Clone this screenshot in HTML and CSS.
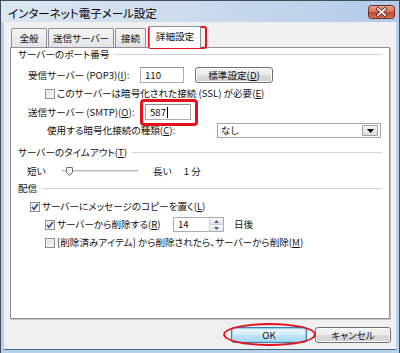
FILE: index.html
```html
<!DOCTYPE html>
<html lang="ja">
<head>
<meta charset="utf-8">
<title>インターネット電子メール設定</title>
<link rel="stylesheet" href="styles.css">
</head>
<body>
<div class="window">
  <div class="titlebar">
    <span class="title">インターネット電子メール設定</span>
    <div class="close">
      <svg width="27" height="14" viewBox="0 0 27 14">
        <defs>
          <linearGradient id="cg" x1="0" y1="0" x2="0" y2="1">
            <stop offset="0" stop-color="#e6a393"/>
            <stop offset="0.5" stop-color="#d7725f"/>
            <stop offset="0.5" stop-color="#c4442f"/>
            <stop offset="1" stop-color="#d3745c"/>
          </linearGradient>
        </defs>
        <rect x="0.5" y="0.5" width="26" height="13" rx="3" fill="url(#cg)" stroke="#6e2d22"/>
        <path d="M10 4 L17 10 M17 4 L10 10" stroke="#4a1a12" stroke-width="3.2" stroke-linecap="square"/>
        <path d="M10 4 L17 10 M17 4 L10 10" stroke="#ffffff" stroke-width="1.8" stroke-linecap="square"/>
      </svg>
    </div>
  </div>
  <div class="client">
    <div class="tabs">
      <div class="tab t1">全般</div>
      <div class="tab t2">送信サーバー</div>
      <div class="tab t3">接続</div>
      <div class="tab t4 active">詳細設定</div>
    </div>
    <div class="panel">
      <div class="group-h g1"><span>サーバーのポート番号</span><i class="rule"></i></div>

      <div class="row r-pop">
        <span class="lbl lbl-pop">受信サーバー (POP3)(<u>I</u>):</span>
        <div class="tb tb-pop">110</div>
        <div class="btn btn-def">標準設定(<u>D</u>)</div>
      </div>

      <div class="row r-ssl">
        <span class="cb"></span>
        <span class="cbl">このサーバーは暗号化された接続 (SSL) が必要(<u>E</u>)</span>
      </div>

      <div class="row r-smtp">
        <span class="lbl lbl-smtp">送信サーバー (SMTP)(<u>O</u>):</span>
        <div class="tb tb-smtp">587<i class="caret"></i></div>
      </div>

      <div class="row r-enc">
        <span class="lbl lbl-enc">使用する暗号化接続の種類(<u>C</u>):</span>
        <div class="sel">
          <span class="sel-text">なし</span>
          <span class="sel-btn">
            <svg width="7" height="4" viewBox="0 0 7 4"><path d="M0 0 H7 L3.5 4 Z" fill="#000"/></svg>
          </span>
        </div>
      </div>

      <div class="group-h g2"><span>サーバーのタイムアウト(<u>T</u>)</span><i class="rule"></i></div>

      <div class="row r-slider">
        <span class="short">短い</span>
        <div class="track">
          <svg class="thumb" width="7" height="9" viewBox="0 0 7 9"><path d="M0.5 0.5 H6.5 V5.5 L3.5 8.5 L0.5 5.5 Z" fill="#f2f2f2" stroke="#6f6f6f"/></svg>
        </div>
        <span class="long">長い</span>
        <span class="min">1 分</span>
      </div>

      <div class="group-h g3"><span>配信</span><i class="rule"></i></div>

      <div class="row r-cb1">
        <span class="cb checked">
          <svg width="8" height="8" viewBox="0 0 8 8"><path d="M1 4 L3 6.2 L7 1" fill="none" stroke="#2c4d8c" stroke-width="1.6"/></svg>
        </span>
        <span class="cbl">サーバーにメッセージのコピーを置く(<u>L</u>)</span>
      </div>

      <div class="row r-cb2">
        <span class="cb checked">
          <svg width="8" height="8" viewBox="0 0 8 8"><path d="M1 4 L3 6.2 L7 1" fill="none" stroke="#2c4d8c" stroke-width="1.6"/></svg>
        </span>
        <span class="cbl cbl-del">サーバーから削除する(<u>R</u>)</span>
        <div class="num">
          <span class="num-text">14</span>
          <span class="spin">
            <span class="spin-b"><svg width="5" height="3" viewBox="0 0 5 3"><path d="M0 3 H5 L2.5 0 Z" fill="#4d6185"/></svg></span>
            <span class="spin-b"><svg width="5" height="3" viewBox="0 0 5 3"><path d="M0 0 H5 L2.5 3 Z" fill="#4d6185"/></svg></span>
          </span>
        </div>
        <span class="days">日後</span>
      </div>

      <div class="row r-cb3">
        <span class="cb"></span>
        <span class="cbl">[削除済みアイテム] から削除されたら、サーバーから削除(<u>M</u>)</span>
      </div>
    </div>
    <div class="buttons">
      <div class="btn ok">OK</div>
      <div class="btn cancel">キャンセル</div>
    </div>
  </div>

  <div class="mark mark-tab"></div>
  <div class="mark mark-smtp"></div>
  <div class="mark mark-ok"></div>
</div>
</body>
</html>
```

FILE: styles.css
```css
html, body {
  margin: 0;
  padding: 0;
  background: #ffffff;
}
body {
  font-family: "Noto Sans CJK JP", "Noto Sans", sans-serif;
  font-size: 9.6px;
  line-height: 13px;
  color: #111;
  font-feature-settings: "palt";
}
u { text-decoration: underline; text-underline-offset: 1px; }

.window {
  position: relative;
  width: 400px;
  height: 353px;
  box-sizing: border-box;
  border: 1px solid #3f4c5b;
  border-bottom: none;
  background: #b9d2ec;
  display: flex;
  flex-direction: column;
  overflow: hidden;
}

.titlebar {
  flex: none;
  height: 21px;
  display: flex;
  align-items: flex-start;
  padding-left: 7px;
  background: linear-gradient(to right, #dbe6f2 0%, #cddcee 45%, #b2cbe8 100%);
}
.title {
  flex: 1;
  font-size: 11.5px;
  line-height: 14px;
  margin-top: 5px;
  color: #000;
}
.close {
  width: 27px;
  height: 14px;
  margin-top: 4px;
  margin-right: 4px;
}
.close svg { display: block; }

.client {
  flex: none;
  margin: 0 3px;
  background: #f0f0f0;
  border-bottom: 1px solid #3c6a7a;
  padding: 4px 6px 0;
  box-sizing: border-box;
  height: 328px;
  display: flex;
  flex-direction: column;
}

.tabs {
  display: flex;
  align-items: flex-end;
  margin-left: 1px;
  height: 21px;
}
.tab {
  box-sizing: border-box;
  height: 19px;
  border: 1px solid #8d9096;
  border-bottom: none;
  border-radius: 2px 2px 0 0;
  background: linear-gradient(#f5f5f5, #e3e3e3);
  display: flex;
  align-items: center;
  justify-content: center;
  padding-top: 1px;
}
.t1 { width: 36px; }
.t2 { width: 66px; margin-left: 1px; }
.t3 { width: 31px; margin-left: 1px; }
.t4 { width: 52px; margin-left: 3px; }
.tab.active {
  height: 22px;
  margin-bottom: -1px;
  background: #ffffff;
  position: relative;
  z-index: 1;
  padding-top: 0;
  padding-bottom: 2px;
}

.panel {
  box-sizing: border-box;
  height: 272px;
  background: #ffffff;
  border: 1px solid #8d9096;
  box-shadow: 1px 1px 0 #c4c4c4;
  padding: 0 7px;
  display: flex;
  flex-direction: column;
}

.group-h {
  display: flex;
  align-items: center;
  height: 13px;
}
.rule {
  flex: 1;
  height: 1px;
  background: #cfd6db;
  margin-left: 5px;
}
.g1 { margin-top: 0; }
.g2 { margin-top: 8px; }
.g3 { margin-top: 4px; }

.row {
  display: flex;
  align-items: center;
}
.r-pop { height: 16px; margin-top: 6px; }
.r-ssl { height: 13px; margin-top: 4px; }
.r-smtp { height: 16px; margin-top: 4px; }
.r-enc { height: 15px; margin-top: 3px; }
.r-slider { height: 14px; margin-top: 5px; }
.r-cb1 { height: 13px; margin-top: 5px; }
.r-cb2 { height: 15px; margin-top: 4px; }
.r-cb3 { height: 13px; margin-top: 4px; }

.lbl { flex: none; }
.lbl-pop { margin-left: 10px; width: 112px; }
.lbl-smtp { margin-left: 10px; width: 117px; }
.lbl-enc { margin-left: 29px; width: 170px; }

.tb {
  box-sizing: border-box;
  height: 16px;
  background: #fff;
  border: 1px solid #abadb3;
  border-top-color: #8e9196;
  display: flex;
  align-items: center;
  padding-left: 4px;
}
.tb-pop { width: 44px; }
.tb-smtp { width: 46px; }
.caret {
  display: inline-block;
  width: 1px;
  height: 11px;
  background: #000;
  margin-left: 1px;
}

.btn {
  box-sizing: border-box;
  height: 16px;
  border: 1px solid #707070;
  border-radius: 3px;
  background: linear-gradient(#f3f3f3 0%, #ebebeb 50%, #dcdcdc 50%, #d0d0d0 100%);
  box-shadow: inset 0 0 0 1px #fbfbfb;
  display: flex;
  align-items: center;
  justify-content: center;
}
.btn-def { width: 78px; margin-left: 11px; }

.cb {
  flex: none;
  box-sizing: border-box;
  width: 10px;
  height: 10px;
  border: 1px solid #8e8f8f;
  background: linear-gradient(135deg, #d8d8d8 0%, #f4f4f4 70%, #ffffff 100%);
  box-shadow: inset 0 0 0 1px #f4f4f4;
  display: flex;
  align-items: center;
  justify-content: center;
}
.cb svg { display: block; }
.cbl { margin-left: 2px; }
.r-ssl .cb, .r-cb2 .cb, .r-cb3 .cb { margin-left: 27px; }
.r-cb1 .cb { margin-left: 12px; }

.sel {
  box-sizing: border-box;
  width: 164px;
  height: 15px;
  background: #fff;
  border: 1px solid #a3a6ab;
  display: flex;
  align-items: center;
}
.sel-text { flex: 1; padding-left: 3px; }
.sel-btn {
  box-sizing: border-box;
  width: 16px;
  height: 11px;
  margin-right: 2px;
  border: 1px solid #9ea2a8;
  border-radius: 1px;
  background: linear-gradient(#f6f6f6, #dedede);
  display: flex;
  align-items: center;
  justify-content: center;
}
.sel-btn svg { display: block; }

.short { margin-left: 9px; width: 35px; flex: none; }
.track {
  position: relative;
  width: 76px;
  border-top: 1px solid #b5b5b5;
  background: #e6e6e6;
  border-bottom: 1px solid #fafafa;
  box-sizing: border-box;
  height: 3px;
}
.thumb {
  position: absolute;
  left: 4px;
  top: -4px;
  display: block;
}
.long { margin-left: 15px; }
.min { margin-left: 12px; }

.cbl-del { width: 116px; flex: none; }
.num {
  box-sizing: border-box;
  width: 51px;
  height: 15px;
  background: #fff;
  border: 1px solid #abadb3;
  display: flex;
}
.num-text { flex: 1; padding-left: 4px; line-height: 13px; }
.spin {
  width: 13px;
  display: flex;
  flex-direction: column;
  border-left: 1px solid #c9ced6;
}
.spin-b {
  flex: 1;
  display: flex;
  align-items: center;
  justify-content: center;
  background: linear-gradient(#f7f9fb, #e1e7ee);
  border-bottom: 1px solid #c9ced6;
}
.spin-b:last-child { border-bottom: none; }
.spin-b svg { display: block; }
.days { margin-left: 10px; }

.buttons {
  display: flex;
  justify-content: flex-end;
  margin-top: 8px;
  margin-right: -1px;
}
.buttons .btn { width: 76px; height: 16px; }
.btn.ok {
  border-color: #3c7fb1;
  background: linear-gradient(#e8f5fd 0%, #d6eefb 50%, #bfe4f8 50%, #a9d8f3 100%);
  box-shadow: inset 0 0 0 1px #92d2f3;
}
.btn.cancel { margin-left: 8px; }

.mark {
  position: absolute;
  box-sizing: border-box;
  border: 2px solid #e5111b;
  pointer-events: none;
}
.mark-tab {
  left: 147px;
  top: 25px;
  width: 59px;
  height: 23px;
  border-radius: 3px;
}
.mark-smtp {
  left: 139px;
  top: 98px;
  width: 58px;
  height: 27px;
  border-width: 3px;
  border-radius: 4px;
}
.mark-ok {
  left: 222px;
  top: 322px;
  width: 93px;
  height: 23px;
  border-radius: 50%;
}
```
